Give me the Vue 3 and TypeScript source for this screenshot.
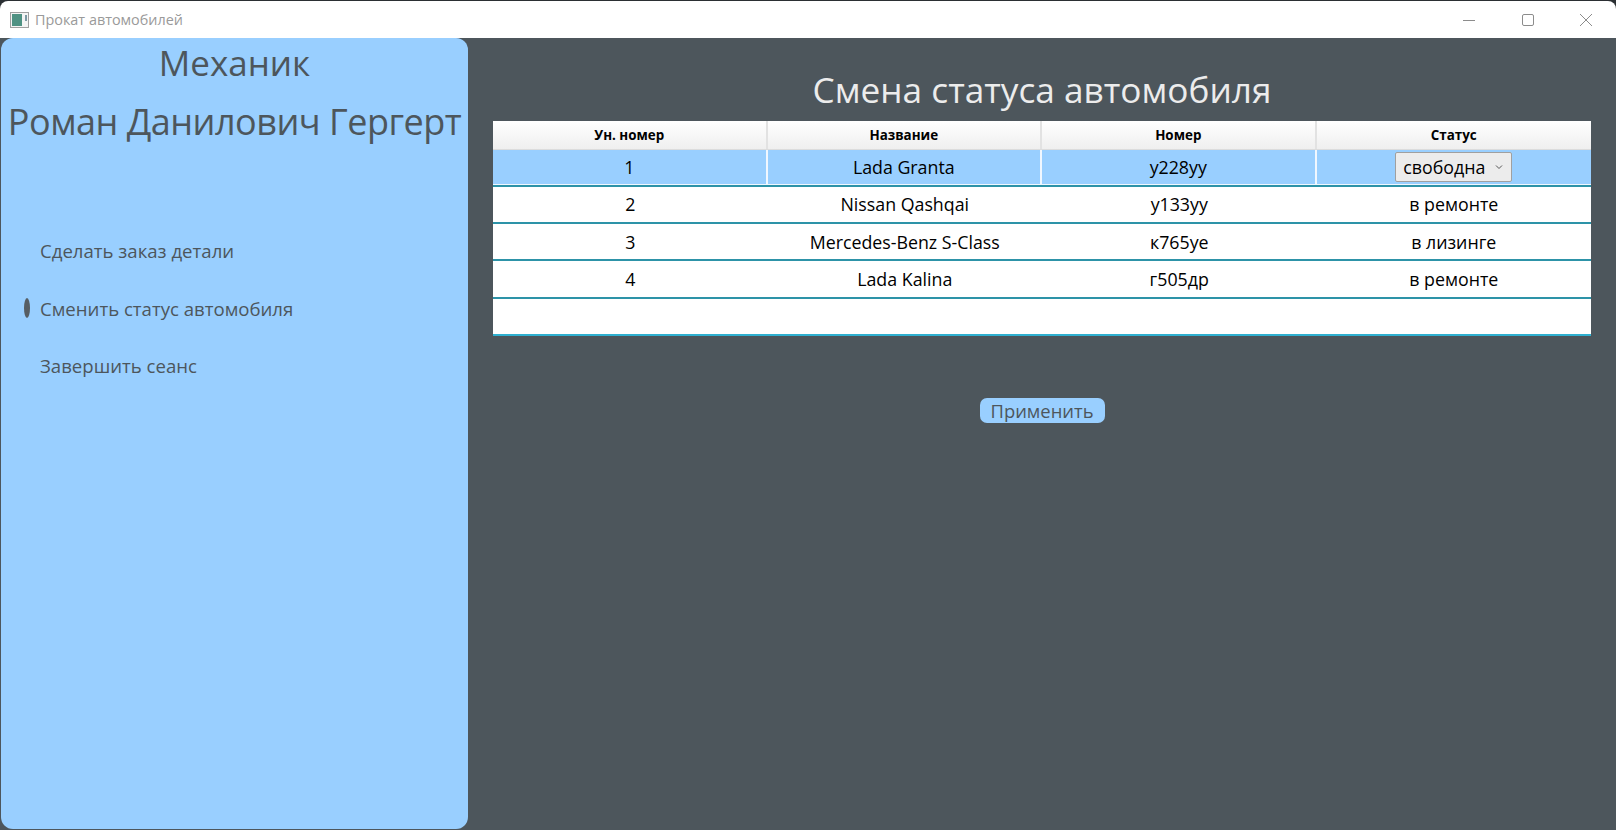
<script setup lang="ts">
interface CarRow {
  id: number
  name: string
  plate: string
  status: string
}

const cars: CarRow[] = [
  { id: 1, name: 'Lada Granta', plate: 'у228уу', status: 'свободна' },
  { id: 2, name: 'Nissan Qashqai', plate: 'у133уу', status: 'в ремонте' },
  { id: 3, name: 'Mercedes-Benz S-Class', plate: 'к765уе', status: 'в лизинге' },
  { id: 4, name: 'Lada Kalina', plate: 'г505др', status: 'в ремонте' },
]

const columns = ['Ун. номер', 'Название', 'Номер', 'Статус']

const menu = [
  { label: 'Сделать заказ детали', active: false },
  { label: 'Сменить статус автомобиля', active: true },
  { label: 'Завершить сеанс', active: false },
]
</script>

<template>
  <div class="window">
    <header class="titlebar">
      <div class="title-left">
        <svg class="app-icon" width="19" height="16" viewBox="0 0 19 16">
          <rect x="0.5" y="0.5" width="18" height="15" fill="#f4f4f4" stroke="#a0a0a0" />
          <rect x="2" y="2" width="10" height="12" fill="#4f9283" />
          <rect x="15" y="3" width="2" height="6" fill="#7d98a3" />
        </svg>
        <span class="app-title">Прокат автомобилей</span>
      </div>
      <div class="controls">
        <svg width="16" height="16" viewBox="0 0 16 16"><path d="M2 8.5h12" stroke="#8c8c8c" fill="none" /></svg>
        <svg width="16" height="16" viewBox="0 0 16 16"><rect x="2.5" y="2.5" width="11" height="11" rx="1.5" stroke="#8c8c8c" fill="none" /></svg>
        <svg width="16" height="16" viewBox="0 0 16 16"><path d="M2 2l12 12M14 2L2 14" stroke="#8c8c8c" fill="none" /></svg>
      </div>
    </header>

    <div class="body">
      <aside class="sidebar">
        <div class="role">Механик</div>
        <div class="person">Роман Данилович Гергерт</div>
        <nav class="menu">
          <div v-for="item in menu" :key="item.label" class="menu-item">
            <span class="marker" :class="{ on: item.active }"></span>
            <span>{{ item.label }}</span>
          </div>
        </nav>
      </aside>

      <main class="content">
        <h1 class="heading">Смена статуса автомобиля</h1>
        <div class="table">
          <div class="thead">
            <div v-for="c in columns" :key="c" class="th">{{ c }}</div>
          </div>
          <div
            v-for="(car, i) in cars"
            :key="car.id"
            class="tr"
            :class="{ selected: i === 0 }"
          >
            <div class="td">{{ car.id }}</div>
            <div class="td">{{ car.name }}</div>
            <div class="td">{{ car.plate }}</div>
            <div class="td">
              <div v-if="i === 0" class="combo">
                <span>{{ car.status }}</span>
                <svg width="8" height="6" viewBox="0 0 8 6"><path d="M1 1.5l3 3 3-3" stroke="#555" fill="none" /></svg>
              </div>
              <template v-else>{{ car.status }}</template>
            </div>
          </div>
          <div class="tr empty"></div>
        </div>
        <div class="actions">
          <button class="apply">Применить</button>
        </div>
      </main>
    </div>
  </div>
</template>

<style>
html, body {
  margin: 0;
  background: #2b2f33;
}
</style>

<style scoped>
.window {
  width: 1616px;
  height: 830px;
  display: flex;
  flex-direction: column;
  overflow: hidden;
  font-family: "Open Sans", "Noto Sans", sans-serif;
}

.titlebar {
  height: 37px;
  margin-top: 1px;
  flex: none;
  background: #fff;
  border-radius: 8px 8px 0 0;
  display: flex;
  justify-content: space-between;
  align-items: center;
}

.title-left {
  display: flex;
  align-items: center;
  gap: 6px;
  padding-left: 10px;
}

.app-title {
  font-size: 14.4px;
  color: #9a9a9a;
}

.controls {
  display: flex;
  gap: 42.5px;
  padding-right: 22px;
}

.body {
  flex: 1;
  display: flex;
  background: #4d565c;
  min-height: 0;
}

.sidebar {
  width: 467px;
  margin-left: 1px;
  margin-bottom: 1px;
  background: #99cfff;
  border-radius: 12px;
  color: #4d565c;
  flex: none;
}

.role {
  font-size: 35px;
  line-height: 50px;
  text-align: center;
}

.person {
  font-size: 36px;
  line-height: 50px;
  margin-top: 9px;
  text-align: center;
  letter-spacing: -0.5px;
  white-space: nowrap;
}

.menu {
  margin-top: 75px;
  padding-left: 23px;
}

.menu-item {
  height: 57.5px;
  display: flex;
  align-items: center;
  gap: 10px;
  font-size: 18.6px;
}

.marker {
  width: 6px;
  height: 20px;
  border-radius: 50%;
}

.marker.on {
  background: #565e64;
}

.content {
  flex: 1;
  padding: 24px 25px 0 25px;
  min-width: 0;
}

.heading {
  margin: 0;
  height: 59px;
  font-size: 35.2px;
  line-height: 55px;
  font-weight: 400;
  text-align: center;
  color: #ececec;
}

.table {
  background: #fff;
  color: #000;
}

.thead {
  display: grid;
  grid-template-columns: repeat(4, 1fr);
  height: 29px;
  background: linear-gradient(#ffffff, #efefef);
  border-bottom: 1px solid #dcdcdc;
  box-sizing: border-box;
}

.th {
  display: flex;
  align-items: center;
  justify-content: center;
  font-size: 13.4px;
  font-weight: 700;
  border-right: 2px solid #e2e2e2;
}

.th:last-child {
  border-right: none;
}

.tr {
  display: grid;
  grid-template-columns: repeat(4, 1fr);
  height: 37.4px;
  box-sizing: border-box;
  border-bottom: 2px solid #2d93a8;
}

.tr.selected {
  height: 36.6px;
  background: #99cfff;
  box-shadow: inset 0 -1px 0 #f0f7ff;
}

.tr.empty {
  border-bottom-color: #2fb0d0;
}

.td {
  display: flex;
  align-items: center;
  justify-content: center;
  font-size: 17.8px;
}

.tr.selected .td {
  border-right: 2px solid #f0f7ff;
}

.tr.selected .td:last-child {
  border-right: none;
}

.combo {
  width: 117px;
  height: 30px;
  box-sizing: border-box;
  display: flex;
  align-items: center;
  justify-content: space-between;
  padding: 0 8px 0 7px;
  background: #ececec;
  border: 1px solid #a0a0a0;
  border-radius: 2px;
}

.actions {
  display: flex;
  justify-content: center;
  margin-top: 62px;
}

.apply {
  width: 125px;
  height: 25px;
  padding: 0;
  border: none;
  border-radius: 7px;
  background: #99cfff;
  color: #4d565c;
  font-family: inherit;
  font-size: 18.4px;
  line-height: 25px;
}
</style>
